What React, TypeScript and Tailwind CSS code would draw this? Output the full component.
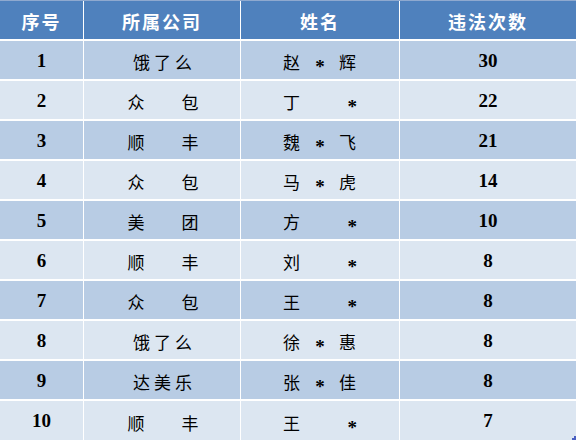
import React from "react";

type Row = { n: number; co: string[]; name: [string, string, string]; c: number };

const rows: Row[] = [
  { n: 1, co: ["饿", "了", "么"], name: ["赵", "*", "辉"], c: 30 },
  { n: 2, co: ["众", "包"], name: ["丁", "", "*"], c: 22 },
  { n: 3, co: ["顺", "丰"], name: ["魏", "*", "飞"], c: 21 },
  { n: 4, co: ["众", "包"], name: ["马", "*", "虎"], c: 14 },
  { n: 5, co: ["美", "团"], name: ["方", "", "*"], c: 10 },
  { n: 6, co: ["顺", "丰"], name: ["刘", "", "*"], c: 8 },
  { n: 7, co: ["众", "包"], name: ["王", "", "*"], c: 8 },
  { n: 8, co: ["饿", "了", "么"], name: ["徐", "*", "惠"], c: 8 },
  { n: 9, co: ["达", "美", "乐"], name: ["张", "*", "佳"], c: 8 },
  { n: 10, co: ["顺", "丰"], name: ["王", "", "*"], c: 7 },
];

const cjk = { fontFamily: '"Noto Sans CJK SC", sans-serif' };
const serif = { fontFamily: '"Liberation Serif", serif' };

function Star() {
  return (
    <span
      className="font-bold text-[19px] leading-none translate-y-[5px] text-black"
      style={serif}
    >
      *
    </span>
  );
}

function Slot({ v, align }: { v: string; align: "start" | "center" | "end" }) {
  const cls =
    align === "start" ? "justify-start" : align === "center" ? "justify-center" : "justify-end";
  return (
    <span className={`flex w-[18px] ${cls}`}>
      {v === "*" ? <Star /> : <span className="leading-none">{v}</span>}
    </span>
  );
}

export default function App() {
  return (
    <div className="relative w-[576px] h-[440px] bg-white overflow-hidden">
      <div className="h-px bg-[#8fa9cf]" />
      <div className="grid grid-cols-[83px_156px_158px_176px] gap-x-px h-[38px] text-white font-bold text-[18px] tracking-[2px]" style={cjk}>
        <div className="bg-[#4f81bd] flex items-center justify-center pt-[3px]">序号</div>
        <div className="bg-[#4f81bd] flex items-center justify-center pt-[3px]">所属公司</div>
        <div className="bg-[#4f81bd] flex items-center justify-center pt-[3px]">姓名</div>
        <div className="bg-[#4f81bd] flex items-center justify-center pt-[3px]">违法次数</div>
      </div>
      <div className="flex flex-col gap-y-[2px] mt-[2px]">
        {rows.map((r, i) => {
          const bg = i % 2 === 0 ? "bg-[#b8cce4]" : "bg-[#dce6f1]";
          const h = i === rows.length - 1 ? "h-[39px]" : "h-[38px]";
          return (
            <div key={r.n} className={`grid grid-cols-[83px_156px_158px_176px] gap-x-px ${h} text-black`}>
              <div className={`${bg} flex items-center justify-center font-bold text-[19px] pt-[2px]`} style={serif}>
                {r.n}
              </div>
              <div
                className={`${bg} flex items-center justify-center text-[17px] pt-[3px] ${r.co.length === 3 ? "gap-[4px] pl-[1px]" : "gap-[37px] pl-[2px]"}`}
                style={cjk}
              >
                {r.co.map((ch, k) => (
                  <span key={k} className="leading-none">{ch}</span>
                ))}
              </div>
              <div className={`${bg} flex items-center justify-center text-[17px] pt-[3px]`} style={cjk}>
                <div className="flex w-[74px] justify-between items-center">
                  <Slot v={r.name[0]} align="start" />
                  <Slot v={r.name[1]} align="center" />
                  <Slot v={r.name[2]} align={r.name[2] === "*" ? "end" : "start"} />
                </div>
              </div>
              <div className={`${bg} flex items-center justify-center font-bold text-[19px] pt-[2px]`} style={serif}>
                {r.c}
              </div>
            </div>
          );
        })}
      </div>
      <div className="absolute right-0 bottom-0 w-[4px] h-[2px] bg-[#4a5fc1]" />
      <div className="absolute right-0 bottom-[2px] w-[2px] h-[2px] bg-[#4a5fc1]" />
    </div>
  );
}
